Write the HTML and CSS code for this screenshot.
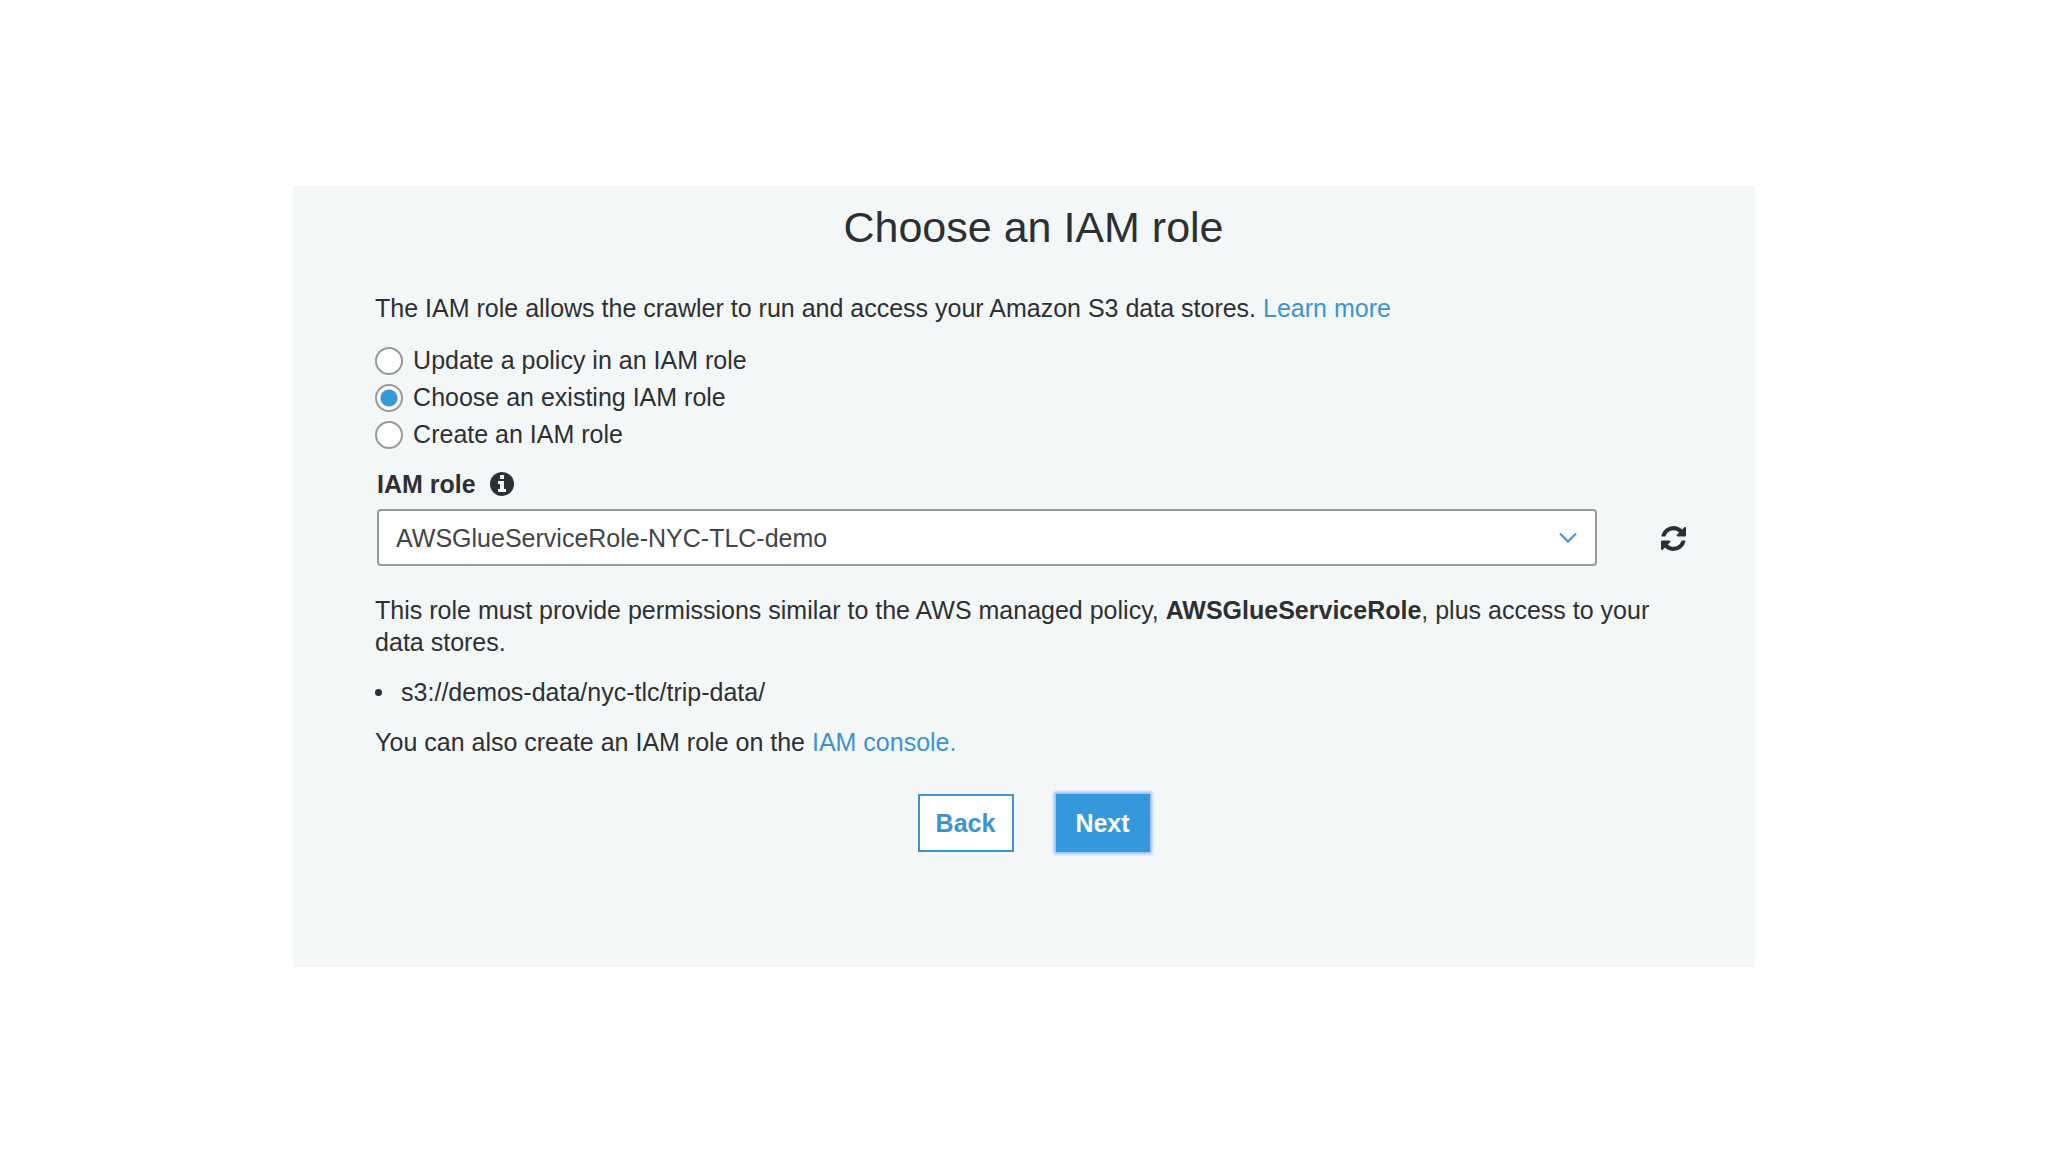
FILE: index.html
```html
<!DOCTYPE html>
<html lang="en">
<head>
  <meta charset="UTF-8">
  <meta name="viewport" content="width=device-width, initial-scale=1.0">
  <title>Choose an IAM role</title>
  <link rel="stylesheet" href="styles.css">
</head>
<body>
  <main class="panel">
    <h1>Choose an IAM role</h1>

    <form id="roleForm">
      <p>The IAM role allows the crawler to run and access your Amazon S3 data stores. <a href="#">Learn more</a></p>

      <!-- How the role is picked -->
      <div class="options">
        <label><input type="radio" name="mode" value="update"> Update a policy in an IAM role</label>
        <label><input type="radio" name="mode" value="existing" checked> Choose an existing IAM role</label>
        <label><input type="radio" name="mode" value="create"> Create an IAM role</label>
      </div>

      <!-- Role select -->
      <div class="field">
        <div class="field-label">
          <label for="role">IAM role</label>
          <svg class="info" viewBox="0 0 24 24" aria-hidden="true">
            <circle cx="12" cy="12" r="12" fill="#2d3032"/>
            <path d="M10 3h4v4h-4zM8 9h6v8h2v3H8v-3h2v-5H8z" fill="#f4f7f8"/>
          </svg>
        </div>
        <div class="field-row">
          <div class="select">
            <select id="role">
              <option>AWSGlueServiceRole-NYC-TLC-demo</option>
            </select>
            <svg class="chevron" viewBox="0 0 18 12" aria-hidden="true">
              <path d="M1 1.500l8 8 8-8" fill="none" stroke="#3c94cf" stroke-width="2"/>
            </svg>
          </div>
          <button type="button" class="refresh" aria-label="Refresh">
            <svg viewBox="0 0 1536 1536" aria-hidden="true">
              <path fill="#2d3032" d="M1511 928q0 5-1 7-64 268-268 434.500T764 1536q-146 0-282.500-55T238 1324l-129 129q-19 19-45 19t-45-19-19-45V960q0-26 19-45t45-19h448q26 0 45 19t19 45-19 45l-137 137q71 66 161 102t187 36q134 0 250-65t186-179q11-17 53-117 8-23 30-23h192q13 0 22.500 9.500t9.500 22.500zm25-800v448q0 26-19 45t-45 19h-448q-26 0-45-19t-19-45 19-45l138-138Q969 256 768 256q-134 0-250 65T332 500q-11 17-53 117-8 23-30 23H50q-13 0-22.500-9.500T18 608v-7q65-268 270-434.500T768 0q146 0 284 55.500T1297 212l130-129q19-19 45-19t45 19 19 45z"/>
            </svg>
          </button>
        </div>
      </div>

      <p>This role must provide permissions similar to the AWS managed policy, <strong>AWSGlueServiceRole</strong>, plus access to your data stores.</p>
      <ul>
        <li>s3://demos-data/nyc-tlc/trip-data/</li>
      </ul>
      <p>You can also create an IAM role on the <a href="#">IAM console.</a></p>

      <div class="actions">
        <button type="button" class="btn">Back</button>
        <button type="submit" class="btn btn-primary">Next</button>
      </div>
    </form>
  </main>
</body>
</html>
```

FILE: styles.css
```css
* {
  box-sizing: border-box;
}

body {
  margin: 0;
  padding: 186px 20px;
  background: #fff;
  color: #2d3032;
  font-family: "Helvetica Neue", "Liberation Sans", Arial, sans-serif;
  font-size: 25px;
  line-height: 32px;
}

.panel {
  width: 72.8%;
  margin: 0 auto;
  padding: 15px 63px 115px 82px;
  background: #f4f7f8;
}

h1 {
  margin: 0 0 39px;
  font-size: 43px;
  line-height: 52px;
  font-weight: normal;
  text-align: center;
}

p {
  margin: 0 0 18px;
}

a {
  color: #3c94cf;
  text-decoration: none;
}

/* Radio list */
.options {
  margin-bottom: 15px;
}

.options label {
  display: flex;
  align-items: center;
  gap: 10px;
  line-height: 37px;
}

.options input {
  appearance: none;
  width: 28px;
  height: 28px;
  margin: 0;
  border: 2px solid #999;
  border-radius: 50%;
  background: #fff;
}

.options input:checked {
  background: radial-gradient(circle, #3498db 8px, #fff 9px);
}

/* Role field */
.field {
  margin-bottom: 28px;
  padding: 0 6px 0 2px;
}

.field-label {
  display: flex;
  align-items: center;
  gap: 14px;
  margin-bottom: 9px;
  font-weight: bold;
}

.info {
  width: 24px;
  height: 24px;
}

.field-row {
  display: flex;
  align-items: center;
  gap: 64px;
}

.select {
  position: relative;
  flex: 1;
}

.select select {
  display: block;
  appearance: none;
  width: 100%;
  height: 57px;
  padding: 0 60px 0 17px;
  border: 2px solid #999;
  border-radius: 4px;
  background: #fff;
  color: #444;
  font: inherit;
}

.chevron {
  position: absolute;
  top: 23px;
  right: 20px;
  width: 18px;
  height: 12px;
  pointer-events: none;
}

.refresh {
  padding: 2px 0 0;
  border: 0;
  background: none;
  cursor: pointer;
}

.refresh svg {
  display: block;
  width: 25px;
  height: 25px;
}

ul {
  margin: 0 0 18px;
  padding: 0;
  list-style: none;
}

li {
  display: flex;
  align-items: center;
  gap: 19px;
}

li::before {
  content: "";
  width: 7px;
  height: 7px;
  border-radius: 50%;
  background: #2d3032;
}

/* Buttons */
.actions {
  display: flex;
  justify-content: center;
  gap: 42px;
  margin-top: 36px;
}

.btn {
  width: 96px;
  height: 58px;
  padding: 0;
  border: 2px solid #3c94cf;
  background: #fff;
  color: #3c94cf;
  font: inherit;
  font-weight: bold;
  cursor: pointer;
}

.btn-primary {
  width: 94px;
  border-color: #3498db;
  background: #3498db;
  color: #fff;
  box-shadow: 0 0 3px 2px #8fb8f8;
}
```
